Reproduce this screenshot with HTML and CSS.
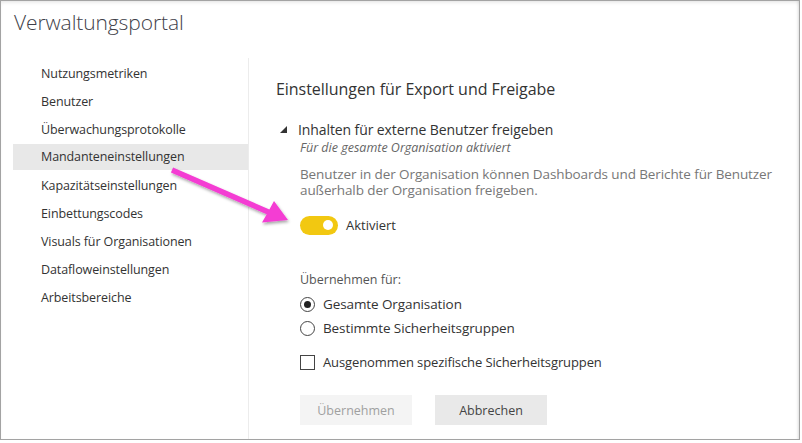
FILE: index.html
```html
<!DOCTYPE html>
<html lang="de">
<head>
<meta charset="utf-8">
<title>Verwaltungsportal</title>
<link rel="stylesheet" href="styles.css">
</head>
<body>
<div class="frame">
  <header class="header"><h1 class="title">Verwaltungsportal</h1></header>
  <div class="main">
    <nav class="sidebar">
      <div class="nav-item">Nutzungsmetriken</div>
      <div class="nav-item">Benutzer</div>
      <div class="nav-item">Überwachungsprotokolle</div>
      <div class="nav-item active">Mandanteneinstellungen</div>
      <div class="nav-item">Kapazitätseinstellungen</div>
      <div class="nav-item">Einbettungscodes</div>
      <div class="nav-item">Visuals für Organisationen</div>
      <div class="nav-item">Dataflow&#x65;instellungen</div>
      <div class="nav-item">Arbeitsbereiche</div>
    </nav>
    <section class="content">
      <h2 class="heading">Einstellungen für Export und Freigabe</h2>
      <div class="setting">
        <div class="setting-title"><span class="caret"></span>Inhalten für externe Benutzer freigeben</div>
        <div class="setting-body">
          <div class="status">Für die gesamte Organisation aktiviert</div>
          <p class="desc">Benutzer in der Organisation können Dashboards und Berichte für Benutzer außerhalb der Organisation freigeben.</p>
          <div class="toggle-row"><span class="toggle"><span class="knob"></span></span><span class="toggle-label">Aktiviert</span></div>
          <div class="apply-label">Übernehmen für:</div>
          <div class="option first"><span class="radio checked"></span>Gesamte Organisation</div>
          <div class="option"><span class="radio"></span>Bestimmte Sicherheitsgruppen</div>
          <div class="option check-option"><span class="checkbox"></span>Ausgenommen spezifische Sicherheitsgruppen</div>
          <div class="buttons">
            <button class="btn btn-disabled">Übernehmen</button>
            <button class="btn">Abbrechen</button>
          </div>
        </div>
      </div>
    </section>
  </div>
  <svg class="arrow" width="802" height="443" viewBox="0 0 802 443" aria-hidden="true">
    <defs>
      <filter id="sh" x="-20%" y="-20%" width="140%" height="140%">
        <feDropShadow dx="1" dy="2" stdDeviation="1.5" flood-color="#000" flood-opacity="0.35"/>
      </filter>
    </defs>
    <g filter="url(#sh)" fill="#f43ed3">
      <polygon points="170.9,172.5 173.1,167.5 270,209.8 267.8,214.8"/>
      <polygon points="288,220 262,222.5 268,212 274,201"/>
    </g>
  </svg>
</div>
</body>
</html>
```
FILE: styles.css
```css
* { box-sizing: border-box; }
html, body { margin: 0; padding: 0; background: #fff; }
body { font-family: "Open Sans", "Noto Sans", sans-serif; color: #333; }

.frame {
  position: relative;
  width: 800px;
  height: 440px;
  border: 1px solid #a3a3a3;
  box-shadow: inset 0 3px 4px -2px rgba(0,0,0,0.12), inset -3px 0 3px -2px rgba(0,0,0,0.12);
  overflow: hidden;
  display: flex;
  flex-direction: column;
}

.header { height: 57px; padding: 7px 0 0 13px; }
.title {
  margin: 0;
  font-size: 21px;
  font-weight: 300;
  color: #3f3f4a;
  letter-spacing: -0.1px;
}

.main { flex: 1; display: flex; }

.sidebar {
  width: 236px;
  margin-left: 12px;
  border-right: 1px solid #ececec;
  padding-top: 2px;
}
.nav-item {
  height: 28px;
  line-height: 28px;
  padding-left: 28px;
  font-size: 12.5px;
  color: #333;
  letter-spacing: -0.1px;
}
.nav-item.active { background: #e8e8e8; height: 26px; line-height: 26px; margin-bottom: 2px; }

.content { flex: 1; padding: 20px 0 0 27px; }
.heading {
  margin: 0 0 17px;
  font-size: 16px;
  font-weight: 400;
  color: #333;
  letter-spacing: -0.05px;
}
.setting-title {
  display: flex;
  align-items: center;
  font-size: 14px;
  color: #333;
  height: 24px;
  letter-spacing: -0.1px;
}
.caret {
  width: 0; height: 0;
  border-left: 7px solid transparent;
  border-bottom: 7px solid #333;
  margin: 0 11px 0 4px;
}
.setting-body { padding-left: 24px; }
.status {
  font-style: italic;
  font-size: 12.5px;
  color: #666;
  line-height: 17px;
  margin-top: -2px;
}
.desc {
  margin: 10px 0 0;
  font-size: 13.5px;
  line-height: 16px;
  color: #777;
  max-width: 480px;
  letter-spacing: -0.1px;
}
.toggle-row { display: flex; align-items: center; margin-top: 17px; height: 20px; }
.toggle {
  width: 38px; height: 19px;
  border-radius: 10px;
  background: #f2c811;
  display: flex; align-items: center; justify-content: flex-end;
  padding-right: 5px;
}
.knob { width: 10px; height: 10px; border-radius: 50%; background: #fff; }
.toggle-label { margin-left: 8px; font-size: 13px; color: #333; }

.apply-label { margin-top: 36px; font-size: 12.5px; color: #555; line-height: 18px; }
.option {
  display: flex; align-items: center;
  height: 24px;
  font-size: 13.5px;
  color: #333;
  letter-spacing: -0.1px;
}
.option.first { margin-top: 3px; }
.radio {
  width: 15px; height: 15px;
  border: 1px solid #444;
  border-radius: 50%;
  margin-right: 8px;
  display: flex; align-items: center; justify-content: center;
}
.radio.checked::after { content: ""; width: 7px; height: 7px; border-radius: 50%; background: #222; }
.check-option { margin-top: 10px; font-size: 13px; }
.checkbox { width: 15px; height: 15px; border: 1px solid #444; margin-right: 8px; }

.buttons { display: flex; gap: 23px; margin-top: 21px; }
.btn {
  width: 112px; height: 30px;
  border: none;
  background: #e9e9e9;
  color: #444;
  font-family: inherit;
  font-size: 12.5px;
  padding: 0;
}
.btn-disabled { background: #f4f4f4; color: #a0a0a0; }

.arrow { position: absolute; left: -1px; top: -1px; pointer-events: none; }
```
